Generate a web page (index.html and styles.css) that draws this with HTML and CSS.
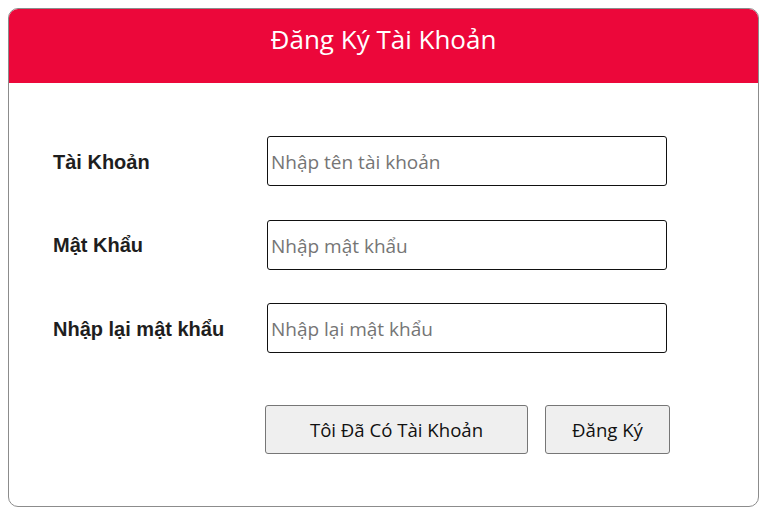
FILE: index.html
```html
<!DOCTYPE html>
<html lang="vi">
<head>
<meta charset="utf-8">
<title>Đăng Ký Tài Khoản</title>
<link rel="stylesheet" href="styles.css">
</head>
<body>
<div class="card">
  <div class="card-header">Đăng Ký Tài Khoản</div>
  <form class="card-body">
    <div class="row">
      <label class="label">Tài Khoản</label>
      <input class="field" type="text" placeholder="Nhập tên tài khoản">
    </div>
    <div class="row">
      <label class="label">Mật Khẩu</label>
      <input class="field" type="password" placeholder="Nhập mật khẩu">
    </div>
    <div class="row">
      <label class="label">Nhập lại mật khẩu</label>
      <input class="field" type="password" placeholder="Nhập lại mật khẩu">
    </div>
    <div class="actions">
      <button type="button" class="btn btn-wide">Tôi Đã Có Tài Khoản</button>
      <button type="button" class="btn btn-small">Đăng Ký</button>
    </div>
  </form>
</div>
</body>
</html>
```
FILE: styles.css
```css
body {
  margin: 8px;
  background: #ffffff;
  font-family: "Open Sans", "Noto Sans", sans-serif;
}
.card {
  border: 1px solid #8c8c8c;
  border-radius: 10px;
  overflow: hidden;
  height: 499px;
  box-sizing: border-box;
}
.card-header {
  height: 74px;
  background: #ec073a;
  color: #ffffff;
  font-size: 26px;
  display: flex;
  align-items: center;
  justify-content: center;
  padding-bottom: 14px;
  box-sizing: border-box;
}
.card-body {
  margin: 0;
  padding: 53px 0 0 44px;
  display: flex;
  flex-direction: column;
  gap: 33.5px;
}
.row {
  display: flex;
  align-items: center;
  height: 50px;
}
.label {
  width: 214px;
  font-family: "Liberation Sans", Arial, sans-serif;
  font-weight: bold;
  font-size: 20px;
  color: #1e1e1e;
  padding-top: 2px;
}
.field {
  width: 400px;
  height: 50px;
  box-sizing: border-box;
  border: 1px solid #111;
  border-radius: 3px;
  padding: 2px 3px 0;
  margin: 0;
  font-family: "Open Sans", "Noto Sans", sans-serif;
  font-size: 19px;
  color: #222;
  outline: none;
}
.field::placeholder {
  color: #757575;
}
.actions {
  display: flex;
  gap: 17px;
  margin-top: 18px;
  padding-left: 212px;
}
.btn {
  height: 49px;
  box-sizing: border-box;
  background: #efefef;
  border: 1px solid #767676;
  border-radius: 3px;
  font-family: "Open Sans", "Noto Sans", sans-serif;
  font-size: 18.6px;
  color: #111;
  padding: 0;
}
.btn-wide { width: 263px; }
.btn-small { width: 125px; }
```
